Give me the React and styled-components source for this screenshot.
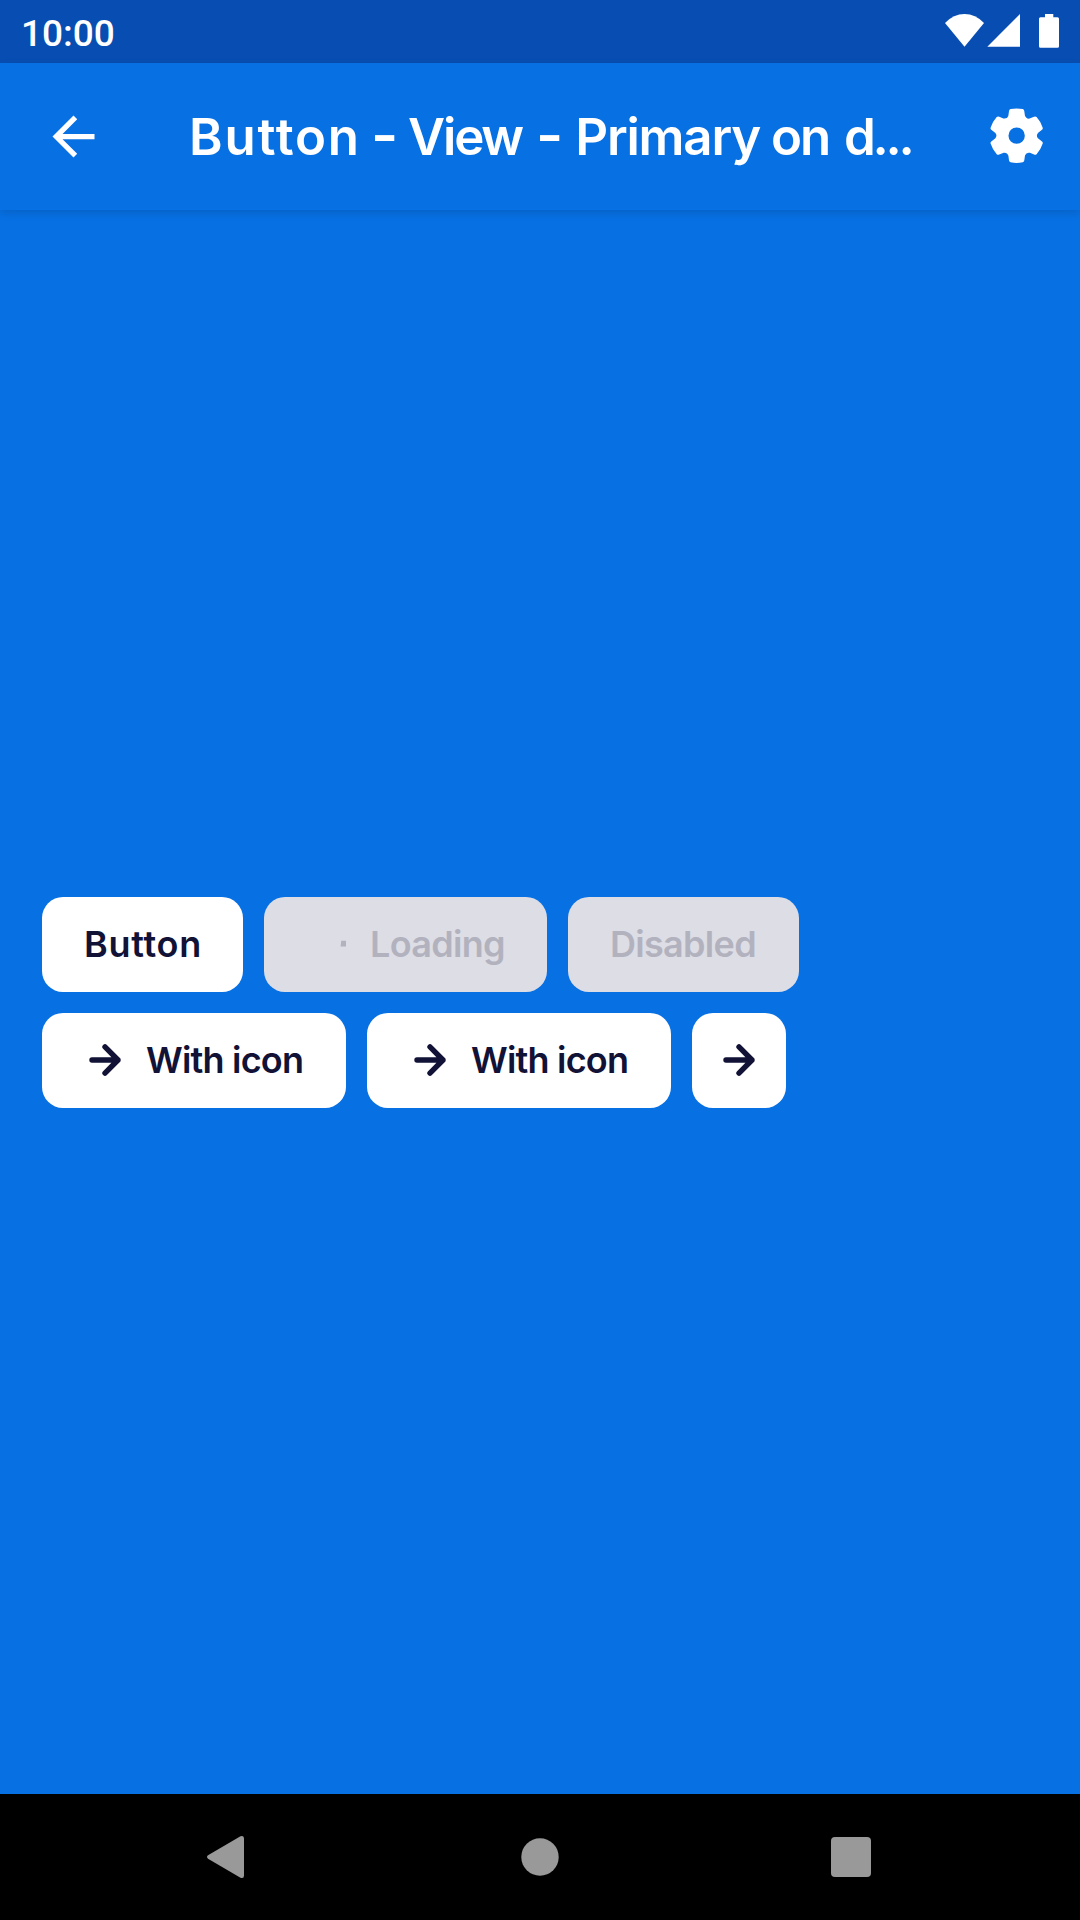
import React from "react";
import styled, { createGlobalStyle } from "styled-components";

const GlobalStyle = createGlobalStyle`
  * { box-sizing: border-box; }
  body { margin: 0; background: #0770e3; }
`;

const Screen = styled.div`
  display: flex;
  flex-direction: column;
  width: 1080px;
  height: 1920px;
  overflow: hidden;
  background: #0770e3;
  font-family: Inter, "Liberation Sans", sans-serif;
`;

const StatusBar = styled.header`
  display: flex;
  align-items: center;
  justify-content: space-between;
  flex: none;
  height: 63px;
  padding: 4px 21px 0 21px;
  background: #084eb2;
  color: #fff;
`;

const Clock = styled.span`
  font: 500 37px/1 Roboto, sans-serif;
`;

const StatusIcons = styled.svg`
  display: block;
  width: 114px;
  height: 34px;
  margin-top: -5px;
  fill: #fff;
`;

const AppBar = styled.nav`
  display: flex;
  align-items: center;
  flex: none;
  height: 147px;
  padding: 0 31px 0 42px;
  background: #0770e3;
  color: #fff;
  box-shadow: 0 3px 8px rgba(0, 0, 0, 0.13);
`;

const BarIcon = styled.svg`
  display: block;
  flex: none;
  width: 63px;
  height: 63px;
  fill: currentColor;
`;

const Title = styled.h1`
  flex: 1;
  margin: 1px 0 0 84px;
  white-space: nowrap;
  font-size: 51px;
  font-weight: 600;
  line-height: 60px;
`;

const Word = styled.span`
  letter-spacing: ${(p) => p.$tracking || 0}px;
  margin-right: ${(p) => p.$after || 0}px;
`;

const Dash = styled(Word)`
  display: inline-block;
  transform: translateY(-2px) scale(1.15, 1.1);
  transform-origin: left center;
`;

const Content = styled.main`
  display: flex;
  flex: 1;
  flex-direction: column;
  justify-content: center;
  gap: 21px;
  padding: 0 42px;
`;

const ButtonRow = styled.div`
  display: flex;
  gap: 21px;
`;

const Button = styled.button`
  display: flex;
  align-items: center;
  justify-content: ${(p) => (p.$iconOnly ? "center" : "flex-start")};
  gap: 21px;
  width: ${(p) => p.$width}px;
  height: 95px;
  padding: 0 ${(p) => (p.$iconOnly ? 0 : 42)}px;
  border: 0;
  border-radius: 21px;
  background: ${(p) => (p.disabled ? "#dddde5" : "#fff")};
  color: ${(p) => (p.disabled ? "#b2b2bf" : "#111236")};
  font: 600 36px/42px Inter, "Liberation Sans", sans-serif;
`;

const Label = styled.span`
  white-space: nowrap;
  letter-spacing: ${(p) => p.$tracking || 0}px;
  margin-left: ${(p) => p.$before || 0}px;
`;

const Glyph = styled.svg`
  display: block;
  flex: none;
  width: 42px;
  height: 42px;
  fill: none;
  stroke: currentColor;
  stroke-width: 5.4;
  stroke-linecap: round;
  stroke-linejoin: round;
`;

const NavigationBar = styled.footer`
  display: flex;
  align-items: center;
  justify-content: space-between;
  flex: none;
  height: 126px;
  padding: 0 209px 0 206px;
  background: #000;
`;

const NavIcon = styled.svg`
  display: block;
  width: ${(p) => p.$width}px;
  height: 44px;
  fill: #999;
`;

const gearTooth = [
  [-18, -78], [0, -82], [18, -78],
  [22, -77], [22.5, -72],
  [24.2, -59],
  [28, -48.5], [38, -50.2],
];

function gearPath() {
  let d = "";
  for (let i = 0; i < 6; i += 1) {
    const a = (i * Math.PI) / 3;
    const p = gearTooth.map(([x, y]) =>
      `${(x * Math.cos(a) - y * Math.sin(a)).toFixed(2)} ${(x * Math.sin(a) + y * Math.cos(a)).toFixed(2)}`
    );
    const b = a + Math.PI / 3;
    const at = (x, y) =>
      `${(x * Math.cos(b) - y * Math.sin(b)).toFixed(2)} ${(x * Math.sin(b) + y * Math.cos(b)).toFixed(2)}`;
    d += `${i ? "L" : "M"}${p[0]}Q${p[1]} ${p[2]}Q${p[3]} ${p[4]}L${p[5]}Q${p[6]} ${p[7]}L${at(-22.5, -72)}Q${at(-22, -77)} ${at(-18, -78)}`;
  }
  return `${d}ZM24 0A24 24 0 1 0 -24 0A24 24 0 1 0 24 0Z`;
}

const Arrow = () => (
  <Glyph viewBox="0 0 42 42">
    <path d="M8 21H34M21 7.8L34 21L21 34.2" />
  </Glyph>
);

const Spinner = () => (
  <Glyph viewBox="0 0 42 42">
    <path d="M35.2 17.8H40V23.6H34.6Z" fill="currentColor" stroke="none" />
  </Glyph>
);

export default function App() {
  return (
    <Screen>
      <GlobalStyle />
      <StatusBar>
        <Clock>10:00</Clock>
        <StatusIcons viewBox="945 14 114 34">
          <path d="M945 23Q953.500 14 964.500 14T984 23L964.500 46.700Z" />
          <path d="M987.300 46.800H1020V14Z" />
          <path d="M1045 14H1053.300V17.300H1057.500Q1059 17.300 1059 18.800V46.300Q1059 47.800 1057.500 47.800H1040.500Q1039 47.800 1039 46.300V18.800Q1039 17.300 1040.500 17.300H1045Z" />
        </StatusIcons>
      </StatusBar>
      <AppBar>
        <BarIcon viewBox="0 0 24 24">
          <path d="M20 11H7.830l5.590-5.590L12 4l-8 8 8 8 1.410-1.410L7.830 13H20v-2z" />
        </BarIcon>
        <Title>
          <Word $tracking={1.8} $after={-3}>Button</Word>{" "}
          <Dash $after={0.8}>-</Dash>{" "}
          <Word $tracking={-2.2} $after={0.8}>View</Word>{" "}
          <Dash $after={3}>-</Dash>{" "}
          <Word $tracking={-1.2} $after={-2}>Primary</Word>{" "}
          <Word $tracking={-2} $after={2}>on</Word>{" "}
          <Word $tracking={-3.3}>d...</Word>
        </Title>
        <BarIcon viewBox="-90 -90 185 185">
          <path fillRule="evenodd" d={gearPath()} />
        </BarIcon>
      </AppBar>
      <Content>
        <ButtonRow>
          <Button $width={201}><Label $tracking={0.7}>Button</Label></Button>
          <Button $width={283} disabled><Spinner /><Label $tracking={-0.7} $before={1}>Loading</Label></Button>
          <Button $width={231} disabled><Label $tracking={-0.7}>Disabled</Label></Button>
        </ButtonRow>
        <ButtonRow>
          <Button $width={304}><Arrow /><Label $tracking={-0.8} $before={-1}>With icon</Label></Button>
          <Button $width={304}><Arrow /><Label $tracking={-0.8} $before={-1}>With icon</Label></Button>
          <Button $width={94} $iconOnly aria-label="Next"><Arrow /></Button>
        </ButtonRow>
      </Content>
      <NavigationBar>
        <NavIcon $width={43} viewBox="0 0 43 44">
          <path d="M2 20.300L34.500 1.300Q38 0 38 3.500V40.500Q38 44 34.500 42.700L2 23.700Q0 22 2 20.300Z" />
        </NavIcon>
        <NavIcon $width={38} viewBox="0 0 38 44">
          <circle cx="19" cy="22" r="18.700" />
        </NavIcon>
        <NavIcon $width={40} viewBox="0 0 40 44">
          <rect x="0" y="2" width="40" height="40" rx="4" />
        </NavIcon>
      </NavigationBar>
    </Screen>
  );
}
